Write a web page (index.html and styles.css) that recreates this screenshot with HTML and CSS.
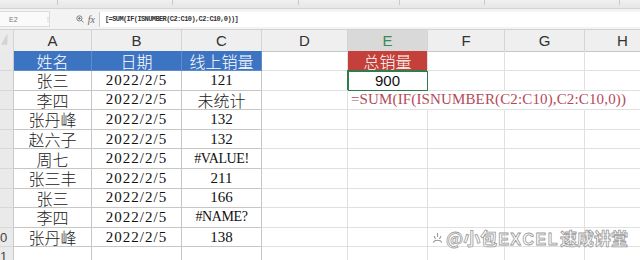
FILE: index.html
```html
<!DOCTYPE html>
<html>
    <head>
        <meta charset="UTF-8">
        <title>线上销量</title>
        <link rel="stylesheet" href="styles.css">
    </head>
    <body>

        <div id="ribbon">
            <div class="group g1"></div>
            <div class="group g2"></div>
            <div class="group g3"></div>
            <div class="group g4"></div>
            <div class="group g5"></div>
            <div class="group g6"></div>
        </div>

        <div id="formulabar">
            <div class="namebox">E2<span class="drop">⁝</span></div>
            <div class="tools">
                <svg width="8" height="8" viewBox="0 0 8 8">
                    <circle cx="3.4" cy="3.4" r="2.6" fill="none" stroke="#777" stroke-width="0.9"/>
                    <path d="M2 3.4h2.8M3.4 2v2.8M5.3 5.3L7.5 7.5" stroke="#777" stroke-width="0.9"/>
                </svg>
                <i>fx</i>
            </div>
            <div class="input">[=SUM(IF(ISNUMBER(C2:C10),C2:C10,0))]</div>
        </div>

        <div id="sheet">
            <div class="row colhead">
                <div class="corner">
                    <svg width="14" height="21" viewBox="0 0 14 21"><path d="M1 15L8 3V15Z" fill="#d3d3d3"/></svg>
                </div>
                <div>A</div><div>B</div><div>C</div><div>D</div>
                <div class="active">E</div><div>F</div><div>G</div><div>H</div>
            </div>

            <div class="row head">
                <div class="rh"></div>
                <div class="c tb th">姓名</div>
                <div class="c tb th">日期</div>
                <div class="c tb th">线上销量</div>
                <div class="c"></div>
                <div class="c total">总销量</div>
                <div class="c"></div><div class="c"></div><div class="c"></div>
            </div>

            <div class="row">
                <div class="rh"></div>
                <div class="c tb">张三</div>
                <div class="c tb num date">2022/2/5</div>
                <div class="c tb num">121</div>
                <div class="c"></div>
                <div class="c sum picked">900</div>
                <div class="c"></div><div class="c"></div><div class="c"></div>
            </div>
            <div class="row">
                <div class="rh"></div>
                <div class="c tb">李四</div>
                <div class="c tb num date">2022/2/5</div>
                <div class="c tb">未统计</div>
                <div class="c"></div>
                <div class="c spill left"><span class="formula">=SUM(IF(ISNUMBER(C2:C10),C2:C10,0))</span></div>
                <div class="c spill"></div><div class="c spill"></div><div class="c"></div>
            </div>
            <div class="row">
                <div class="rh"></div>
                <div class="c tb">张丹峰</div>
                <div class="c tb num date">2022/2/5</div>
                <div class="c tb num">132</div>
                <div class="c"></div><div class="c"></div><div class="c"></div><div class="c"></div><div class="c"></div>
            </div>
            <div class="row">
                <div class="rh"></div>
                <div class="c tb">赵六子</div>
                <div class="c tb num date">2022/2/5</div>
                <div class="c tb num">132</div>
                <div class="c"></div><div class="c"></div><div class="c"></div><div class="c"></div><div class="c"></div>
            </div>
            <div class="row">
                <div class="rh"></div>
                <div class="c tb">周七</div>
                <div class="c tb num date">2022/2/5</div>
                <div class="c tb num err">#VALUE!</div>
                <div class="c"></div><div class="c"></div><div class="c"></div><div class="c"></div><div class="c"></div>
            </div>
            <div class="row">
                <div class="rh"></div>
                <div class="c tb">张三丰</div>
                <div class="c tb num date">2022/2/5</div>
                <div class="c tb num">211</div>
                <div class="c"></div><div class="c"></div><div class="c"></div><div class="c"></div><div class="c"></div>
            </div>
            <div class="row">
                <div class="rh"></div>
                <div class="c tb">张三</div>
                <div class="c tb num date">2022/2/5</div>
                <div class="c tb num">166</div>
                <div class="c"></div><div class="c"></div><div class="c"></div><div class="c"></div><div class="c"></div>
            </div>
            <div class="row">
                <div class="rh"></div>
                <div class="c tb">李四</div>
                <div class="c tb num date">2022/2/5</div>
                <div class="c tb num err">#NAME?</div>
                <div class="c"></div><div class="c"></div><div class="c"></div><div class="c"></div><div class="c"></div>
            </div>
            <div class="row">
                <div class="rh">0</div>
                <div class="c tb">张丹峰</div>
                <div class="c tb num date">2022/2/5</div>
                <div class="c tb num">138</div>
                <div class="c"></div><div class="c"></div><div class="c"></div><div class="c"></div><div class="c"></div>
            </div>
            <div class="row">
                <div class="rh">1</div>
                <div class="c tb"></div><div class="c tb"></div><div class="c tb"></div>
                <div class="c"></div><div class="c"></div><div class="c"></div><div class="c"></div><div class="c"></div>
            </div>
        </div>

        <div class="watermark">
            <svg width="11" height="12" viewBox="0 0 11 12">
                <path d="M5.5 1v4M2 4l1.5 3M9 4L7.5 7M1 10.5c1.2-2 2.8-2.2 4.5-2.2s3.3.2 4.5 2.2" fill="none" stroke="#999" stroke-width="1.1"/>
            </svg>
            <span>@小包<b>EXCEL</b>速成讲堂</span>
        </div>

    </body>
</html>
```

FILE: styles.css
```css
body {
    margin: 0;
    background: #fff;
    overflow: hidden;
    font-family: "Noto Sans CJK SC", sans-serif;
}

/* ribbon remnant at the top */
#ribbon {
    height: 8px;
    display: flex;
    background: linear-gradient(#f0f0f0, #e6e6e6);
    border-bottom: 1px solid #d4d4d4;
}
#ribbon .group {
    height: 5px;
    border-right: 1px solid #c9c9c9;
}
#ribbon .g1 { width: 57px; }
#ribbon .g2 { width: 114px; }
#ribbon .g3 { width: 125px; }
#ribbon .g4 { width: 100px; }
#ribbon .g5 { width: 84px; }
#ribbon .g6 { width: 134px; }

/* formula bar */
#formulabar {
    height: 20px;
    display: flex;
    align-items: center;
    background: #f3f3f3;
    border-bottom: 1px solid #d2d2d2;
}
.namebox {
    width: 40px;
    height: 14px;
    padding-left: 9px;
    display: flex;
    align-items: center;
    justify-content: space-between;
    background: #fafafa;
    border: 1px solid #dcdcdc;
    border-left: 0;
    font: 7px "Liberation Sans", sans-serif;
    color: #777;
}
.namebox .drop {
    font-size: 7px;
    color: #999;
}
.tools {
    width: 45px;
    display: flex;
    align-items: center;
    justify-content: flex-end;
    gap: 4px;
    padding-right: 4px;
}
.tools i {
    font: italic 10px "Liberation Serif", serif;
    color: #666;
}
.input {
    flex: 1;
    height: 15px;
    padding-left: 5px;
    display: flex;
    align-items: center;
    background: #fff;
    border-left: 1px solid #c8c8c8;
    font: bold 7px "Liberation Mono", monospace;
    letter-spacing: -0.6px;
    color: #333;
}

/* sheet grid */
#sheet {
    width: 661px;
}
.row {
    display: grid;
    grid-template-columns: 14px 78px 90px 80px 86px 80px 77px 80px 76px;
    height: 19.6px;
}
.row > div {
    box-sizing: border-box;
    display: flex;
    align-items: center;
    justify-content: center;
    white-space: nowrap;
    line-height: 1;
}
.row.head {
    height: 20px;
}

.colhead {
    height: 21px !important;
}
.colhead > div {
    background: #efefef;
    border-right: 1px solid #d4d4d4;
    border-bottom: 1px solid #c6c6c6;
    font: 15px "Liberation Sans", sans-serif;
    color: #333;
}
.colhead .corner {
    background: #ebebeb;
    align-items: flex-start;
}
.colhead .active {
    background: #d9d9d9;
    color: #3d8a4e;
    border-bottom: 1px solid #b8b8b8;
}

.rh {
    background: #eaeaea;
    border-right: 1px solid #c9c9c9;
    border-bottom: 1px solid #d8d8d8;
    justify-content: flex-start !important;
    overflow: hidden;
    font: 13px "Liberation Sans", sans-serif;
    color: #444;
}

.c {
    border-right: 1px solid #e0e0e0;
    border-bottom: 1px solid #e0e0e0;
    font-size: 16px;
    font-weight: 300;
    color: #222;
}
.c.tb {
    border-color: #c6c6c6;
}
.c.th {
    background: #3d74c2;
    border-color: #5d8bcc;
    color: #fff;
}
.c.total {
    background: #c4403a;
    color: #fff;
}
.c.num {
    font: 15px "Liberation Serif", serif;
    color: #111;
}
.c.date {
    letter-spacing: 1px;
}
.c.err {
    font-size: 14px;
    letter-spacing: -0.4px;
}
.c.sum {
    font: 15px "Liberation Sans", sans-serif;
    color: #111;
}
.c.picked {
    border-color: #2f7d4c;
    box-shadow: inset 1px 1px 0 #2f7d4c, -1px -1px 0 #2f7d4c;
}
.c.spill {
    border-right-color: transparent;
}
.c.left {
    justify-content: flex-start;
    padding-left: 3px;
    overflow: visible;
}
.formula {
    font: 15px "Liberation Serif", serif;
    letter-spacing: 0.14px;
    color: #b44a58;
}

/* watermark over the grid */
.watermark {
    position: absolute;
    right: 12px;
    bottom: 10px;
    display: flex;
    align-items: center;
    gap: 3px;
}
.watermark span {
    font: bold 17px "Noto Sans CJK SC", sans-serif;
    color: rgba(255, 255, 255, 0.85);
    -webkit-text-stroke: 0.8px #9a9a9a;
}
.watermark b {
    font: bold 16px "Liberation Sans", sans-serif;
    letter-spacing: 1.5px;
    padding: 0 1px;
}
```
